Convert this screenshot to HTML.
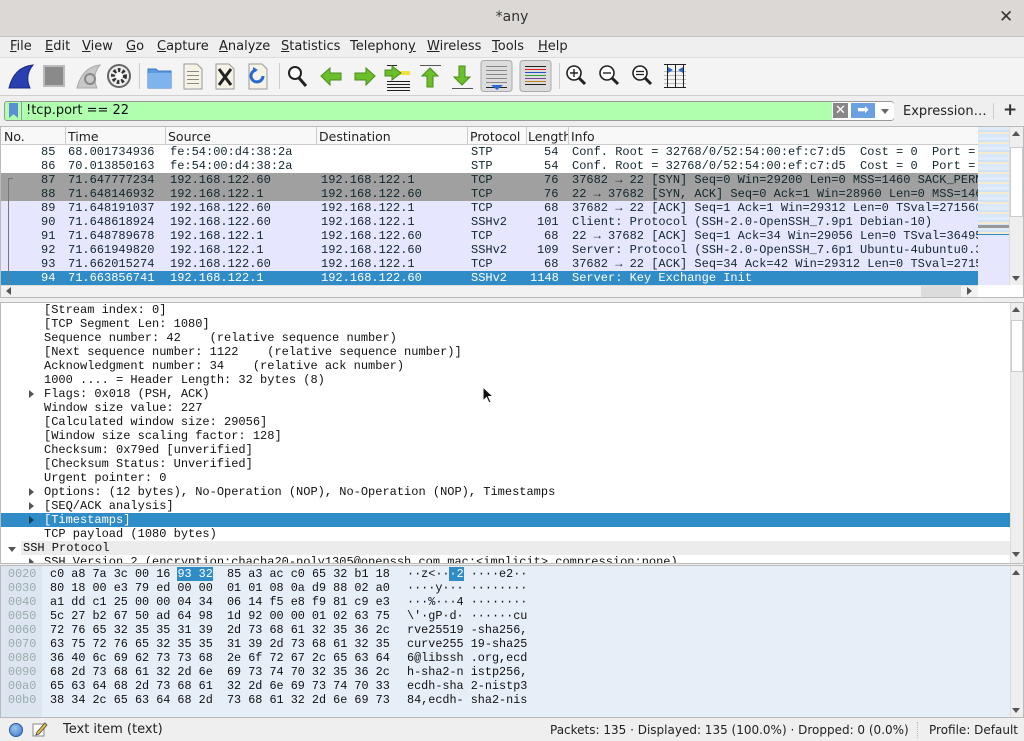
<!DOCTYPE html>
<html><head><meta charset="utf-8">
<style>
*{margin:0;padding:0;box-sizing:border-box}
body{width:1024px;height:741px;overflow:hidden;background:#efefef;font-family:"DejaVu Sans","Liberation Sans",sans-serif;font-size:13px;color:#222;position:relative}
.a{position:absolute;white-space:nowrap}
.m{font-family:"Liberation Mono","DejaVu Sans Mono",monospace;font-size:11.8px;white-space:pre;line-height:14px}
.m .a{white-space:pre}
.row{position:absolute;left:0;height:14px}
.tri{position:absolute;width:0;height:0;border-top:4px solid transparent;border-bottom:4px solid transparent;border-left:5px solid #555}
.trid{position:absolute;width:0;height:0;border-left:4px solid transparent;border-right:4px solid transparent;border-top:5px solid #555}
u{text-decoration:underline}
</style></head><body>
<!-- title -->
<div class="a" style="left:0;top:0;width:1024px;height:37px;background:#dcd8d5;border-bottom:1px solid #c8c4c0"></div>
<div class="a" style="left:0;top:9px;width:1024px;text-align:center;font-size:14px;color:#333">*any</div>
<div class="a" style="left:999px;top:7px;font-size:17px;font-weight:bold;color:#333">✕</div>
<!-- menu -->
<div class="a" style="left:0;top:37px;width:1024px;height:20px;background:#efefef"></div>
<div class="a" style="top:39px;left:10px"><u>F</u>ile</div>
<div class="a" style="top:39px;left:45px"><u>E</u>dit</div>
<div class="a" style="top:39px;left:82px"><u>V</u>iew</div>
<div class="a" style="top:39px;left:126px"><u>G</u>o</div>
<div class="a" style="top:39px;left:157px"><u>C</u>apture</div>
<div class="a" style="top:39px;left:219px"><u>A</u>nalyze</div>
<div class="a" style="top:39px;left:281px"><u>S</u>tatistics</div>
<div class="a" style="top:39px;left:350px">Telephon<u>y</u></div>
<div class="a" style="top:39px;left:427px"><u>W</u>ireless</div>
<div class="a" style="top:39px;left:492px"><u>T</u>ools</div>
<div class="a" style="top:39px;left:538px"><u>H</u>elp</div>
<!-- toolbar -->
<div class="a" style="left:0;top:57px;width:1024px;height:39px;background:#f4f4f4;border-top:1px solid #ddd;border-bottom:1px solid #cfcfcf"></div>
<svg class="a" style="left:0;top:57px" width="720" height="39">
<path d="M9 31 C12 18 20 9 33 8 C28 14 26 22 30 31 Z" fill="#2a3fb0" stroke="#1a2a80"/>
<rect x="44" y="9" width="20" height="20" fill="#8a8a8a" stroke="#bbb" stroke-width="2"/>
<path d="M77 31 C80 18 88 9 100 8 C95 14 93 22 97 31 Z" fill="#c8c8c8" stroke="#aaa"/>
<circle cx="90" cy="22" r="5" fill="none" stroke="#888" stroke-width="2"/>
<circle cx="119" cy="19" r="11" fill="#eee" stroke="#666" stroke-width="2"/>
<circle cx="119" cy="19" r="6" fill="none" stroke="#333" stroke-width="4" stroke-dasharray="2.5 2"/>
<circle cx="119" cy="19" r="3" fill="#fff"/>
<line x1="139.5" y1="6" x2="139.5" y2="32" stroke="#ccc"/>
<path d="M148 12 h8 l2 2 h13 v17 h-23 Z" fill="#5b9be0" stroke="#3a78c0"/>
<rect x="148" y="16" width="23" height="15" fill="#7fb3ee"/>
<path d="M184 7 h13 l5 5 v20 h-18 Z" fill="#f5f3e6" stroke="#999"/>
<g fill="#888"><rect x="187" y="14" width="12" height="1"/><rect x="187" y="18" width="12" height="1"/><rect x="187" y="22" width="12" height="1"/><rect x="187" y="26" width="12" height="1"/></g>
<path d="M216 7 h13 l5 5 v20 h-18 Z" fill="#f5f3e6" stroke="#999"/>
<path d="M219 12 L231 28 M231 12 L219 28" stroke="#222" stroke-width="3"/>
<path d="M249 7 h13 l5 5 v20 h-18 Z" fill="#f5f3e6" stroke="#999"/>
<path d="M263 19 A6 6 0 1 1 256 13" fill="none" stroke="#2a6ad0" stroke-width="3"/>
<path d="M253 10 l5 3 -5 3 Z" fill="#2a6ad0"/>
<line x1="279.5" y1="6" x2="279.5" y2="32" stroke="#ccc"/>
<circle cx="295" cy="16" r="6" fill="#fff" stroke="#222" stroke-width="2"/>
<path d="M299 21 L306 29" stroke="#222" stroke-width="3"/>
<path d="M321 19 l9-8 v5 h11 v7 h-11 v5 Z" fill="#6bbf2a" stroke="#4a8c1a"/>
<path d="M375 19 l-9-8 v5 h-11 v7 h11 v5 Z" fill="#6bbf2a" stroke="#4a8c1a"/>
<g stroke="#222"><line x1="387" y1="24.5" x2="410" y2="24.5"/><line x1="387" y1="27.5" x2="410" y2="27.5"/><line x1="387" y1="30.5" x2="410" y2="30.5"/><line x1="387" y1="33.5" x2="410" y2="33.5"/><line x1="387" y1="8.5" x2="397" y2="8.5"/></g>
<rect x="400" y="14" width="10" height="4" fill="#f0e040"/>
<path d="M401 16 l-9-7 v4 h-7 v6 h7 v4 Z" fill="#6bbf2a" stroke="#4a8c1a"/>
<line x1="420" y1="8.5" x2="441" y2="8.5" stroke="#555"/>
<path d="M430 11 l-8 8 h5 v11 h6 v-11 h5 Z" fill="#6bbf2a" stroke="#4a8c1a"/>
<line x1="452" y1="31.5" x2="473" y2="31.5" stroke="#555"/>
<path d="M462 28 l-8-8 h5 v-11 h6 v11 h5 Z" fill="#6bbf2a" stroke="#4a8c1a"/>
<rect x="481" y="3.5" width="31" height="31" rx="3" fill="#dcdcdc" stroke="#aaa"/>
<g stroke="#888"><line x1="486" y1="9.5" x2="507" y2="9.5"/><line x1="486" y1="13.5" x2="507" y2="13.5"/><line x1="486" y1="17.5" x2="507" y2="17.5"/><line x1="486" y1="21.5" x2="507" y2="21.5"/><line x1="486" y1="25.5" x2="507" y2="25.5"/></g>
<line x1="486" y1="30.5" x2="507" y2="30.5" stroke="#222"/>
<path d="M491 28 h12 l-6 5 Z" fill="#2a6ad0"/>
<rect x="520" y="3.5" width="31" height="31" rx="3" fill="#dcdcdc" stroke="#aaa"/>
<line x1="525" y1="9.5" x2="546" y2="9.5" stroke="#222"/><line x1="525" y1="12.5" x2="546" y2="12.5" stroke="#e02020"/><line x1="525" y1="15.5" x2="546" y2="15.5" stroke="#2a50d0"/><line x1="525" y1="18.5" x2="546" y2="18.5" stroke="#30a030"/><line x1="525" y1="21.5" x2="546" y2="21.5" stroke="#8040a0"/><line x1="525" y1="24.5" x2="546" y2="24.5" stroke="#c08020"/><line x1="525" y1="27.5" x2="546" y2="27.5" stroke="#222"/>
<line x1="559.5" y1="6" x2="559.5" y2="32" stroke="#ccc"/>
<circle cx="574" cy="16" r="7" fill="#fff" stroke="#222" stroke-width="1.6"/><path d="M570 16h8M574 12v8" stroke="#222" stroke-width="1.4"/><path d="M579 21 L585 27" stroke="#222" stroke-width="3"/>
<circle cx="607" cy="16" r="7" fill="#fff" stroke="#222" stroke-width="1.6"/><path d="M603 16h8" stroke="#222" stroke-width="1.4"/><path d="M612 21 L618 27" stroke="#222" stroke-width="3"/>
<circle cx="640" cy="16" r="7" fill="#fff" stroke="#222" stroke-width="1.6"/><path d="M636 14.5h8M636 17.5h8" stroke="#222" stroke-width="1.2"/><path d="M645 21 L651 27" stroke="#222" stroke-width="3"/>
<g stroke="#bbb"><line x1="664" y1="14.5" x2="686" y2="14.5"/><line x1="664" y1="18.5" x2="686" y2="18.5"/><line x1="664" y1="22.5" x2="686" y2="22.5"/><line x1="664" y1="26.5" x2="686" y2="26.5"/></g>
<g stroke="#222"><line x1="664" y1="7.5" x2="686" y2="7.5"/><line x1="664" y1="30.5" x2="686" y2="30.5"/><line x1="667.5" y1="7" x2="667.5" y2="31"/><line x1="675.5" y1="7" x2="675.5" y2="31"/><line x1="683.5" y1="7" x2="683.5" y2="31"/></g>
<path d="M668 10 l5 3 -5 3Z M683 10 l-5 3 5 3Z" fill="#2a6ad0"/>
</svg>
<!-- filter -->
<div class="a" style="left:0;top:96px;width:1024px;height:30px;background:#efefef"></div>
<div class="a" style="left:4px;top:101px;width:890px;height:20px;background:#afffaf;border:1px solid #999;border-radius:3px"></div>
<div class="a" style="left:9px;top:103px;width:9px;height:15px;background:#5b8fd0;clip-path:polygon(0 0,100% 0,100% 100%,50% 75%,0 100%)"></div>
<div class="a" style="left:21px;top:101px;width:1px;height:20px;background:#999"></div>
<div class="a" style="left:26px;top:103px;font-size:13px;color:#111">!tcp.port == 22</div>
<div class="a" style="left:832px;top:102px;width:62px;height:18px;background:#fff;border-radius:0 3px 3px 0"></div>
<div class="a" style="left:833px;top:103px;width:15px;height:15px;background:#888;color:#fff;font-size:13px;line-height:15px;text-align:center">✕</div>
<div class="a" style="left:851px;top:103px;width:24px;height:15px;background:#6aa0e0;color:#fff;font-size:14px;line-height:14px;text-align:center">➡</div>
<div class="trid" style="left:881px;top:109px;border-top-color:#666"></div>
<div class="a" style="left:903px;top:104px;color:#222">Expression…</div>
<div class="a" style="left:993px;top:103px;width:1px;height:16px;background:#ccc"></div>
<div class="a" style="left:1003px;top:100px;font-size:17px;font-weight:bold;color:#333">+</div>
<!-- packet list -->
<div class="a" style="left:0;top:126px;width:1024px;height:172px;background:#fff;border:1px solid #bbb"></div>
<div class="a" style="left:1px;top:127px;width:977px;height:18px;background:#f8f8f8;border-bottom:1px solid #ccc"></div>
<div class="a" style="top:129px;left:4px;font-size:12.5px">No.</div>
<div class="a" style="top:129px;left:68px;font-size:12.5px">Time</div>
<div class="a" style="top:129px;left:168px;font-size:12.5px">Source</div>
<div class="a" style="top:129px;left:319px;font-size:12.5px">Destination</div>
<div class="a" style="top:129px;left:470px;font-size:12.5px">Protocol</div>
<div class="a" style="top:129px;left:528px;width:40px;overflow:hidden;white-space:nowrap;font-size:12.5px">Length</div>
<div class="a" style="top:129px;left:571px;font-size:12.5px">Info</div>
<div class="a" style="top:127px;left:65px;width:1px;height:18px;background:#ccc"></div>
<div class="a" style="top:127px;left:165px;width:1px;height:18px;background:#ccc"></div>
<div class="a" style="top:127px;left:316px;width:1px;height:18px;background:#ccc"></div>
<div class="a" style="top:127px;left:467px;width:1px;height:18px;background:#ccc"></div>
<div class="a" style="top:127px;left:526px;width:1px;height:18px;background:#ccc"></div>
<div class="a" style="top:127px;left:568px;width:1px;height:18px;background:#ccc"></div>
<div class="a m" style="left:1px;top:145px;width:977px;height:140px;overflow:hidden;color:#12272e;font-size:12px">
<div class="row" style="top:0;width:977px;background:#fff"><span class="a" style="left:40px">85</span><span class="a" style="left:67px">68.001734936</span><span class="a" style="left:169px">fe:54:00:d4:38:2a</span><span class="a" style="left:470px">STP</span><span class="a" style="left:543px">54</span><span class="a" style="left:571px">Conf. Root = 32768/0/52:54:00:ef:c7:d5  Cost = 0  Port = 0x8003</span></div>
<div class="row" style="top:14px;width:977px;background:#fff"><span class="a" style="left:40px">86</span><span class="a" style="left:67px">70.013850163</span><span class="a" style="left:169px">fe:54:00:d4:38:2a</span><span class="a" style="left:470px">STP</span><span class="a" style="left:543px">54</span><span class="a" style="left:571px">Conf. Root = 32768/0/52:54:00:ef:c7:d5  Cost = 0  Port = 0x8003</span></div>
<div class="row" style="top:28px;width:977px;background:#a0a0a0"><span class="a" style="left:40px">87</span><span class="a" style="left:67px">71.647777234</span><span class="a" style="left:169px">192.168.122.60</span><span class="a" style="left:320px">192.168.122.1</span><span class="a" style="left:470px">TCP</span><span class="a" style="left:543px">76</span><span class="a" style="left:571px">37682 → 22 [SYN] Seq=0 Win=29200 Len=0 MSS=1460 SACK_PERM=1</span></div>
<div class="row" style="top:42px;width:977px;background:#a0a0a0"><span class="a" style="left:40px">88</span><span class="a" style="left:67px">71.648146932</span><span class="a" style="left:169px">192.168.122.1</span><span class="a" style="left:320px">192.168.122.60</span><span class="a" style="left:470px">TCP</span><span class="a" style="left:543px">76</span><span class="a" style="left:571px">22 → 37682 [SYN, ACK] Seq=0 Ack=1 Win=28960 Len=0 MSS=1460</span></div>
<div class="row" style="top:56px;width:977px;background:#e7e6ff"><span class="a" style="left:40px">89</span><span class="a" style="left:67px">71.648191037</span><span class="a" style="left:169px">192.168.122.60</span><span class="a" style="left:320px">192.168.122.1</span><span class="a" style="left:470px">TCP</span><span class="a" style="left:543px">68</span><span class="a" style="left:571px">37682 → 22 [ACK] Seq=1 Ack=1 Win=29312 Len=0 TSval=2715600</span></div>
<div class="row" style="top:70px;width:977px;background:#e7e6ff"><span class="a" style="left:40px">90</span><span class="a" style="left:67px">71.648618924</span><span class="a" style="left:169px">192.168.122.60</span><span class="a" style="left:320px">192.168.122.1</span><span class="a" style="left:470px">SSHv2</span><span class="a" style="left:536px">101</span><span class="a" style="left:571px">Client: Protocol (SSH-2.0-OpenSSH_7.9p1 Debian-10)</span></div>
<div class="row" style="top:84px;width:977px;background:#e7e6ff"><span class="a" style="left:40px">91</span><span class="a" style="left:67px">71.648789678</span><span class="a" style="left:169px">192.168.122.1</span><span class="a" style="left:320px">192.168.122.60</span><span class="a" style="left:470px">TCP</span><span class="a" style="left:543px">68</span><span class="a" style="left:571px">22 → 37682 [ACK] Seq=1 Ack=34 Win=29056 Len=0 TSval=3649500</span></div>
<div class="row" style="top:98px;width:977px;background:#e7e6ff"><span class="a" style="left:40px">92</span><span class="a" style="left:67px">71.661949820</span><span class="a" style="left:169px">192.168.122.1</span><span class="a" style="left:320px">192.168.122.60</span><span class="a" style="left:470px">SSHv2</span><span class="a" style="left:536px">109</span><span class="a" style="left:571px">Server: Protocol (SSH-2.0-OpenSSH_7.6p1 Ubuntu-4ubuntu0.3)</span></div>
<div class="row" style="top:112px;width:977px;background:#e7e6ff"><span class="a" style="left:40px">93</span><span class="a" style="left:67px">71.662015274</span><span class="a" style="left:169px">192.168.122.60</span><span class="a" style="left:320px">192.168.122.1</span><span class="a" style="left:470px">TCP</span><span class="a" style="left:543px">68</span><span class="a" style="left:571px">37682 → 22 [ACK] Seq=34 Ack=42 Win=29312 Len=0 TSval=2715</span></div>
<div class="row" style="top:126px;width:977px;background:#308cc6;color:#fff"><span class="a" style="left:40px">94</span><span class="a" style="left:67px">71.663856741</span><span class="a" style="left:169px">192.168.122.1</span><span class="a" style="left:320px">192.168.122.60</span><span class="a" style="left:470px">SSHv2</span><span class="a" style="left:529px">1148</span><span class="a" style="left:571px">Server: Key Exchange Init</span></div>
<div class="a" style="left:7px;top:33px;width:5px;height:107px;border-left:1px solid #777;border-top:1px solid #777"></div>
</div>
<!-- hscroll -->
<div class="a" style="left:1px;top:285px;width:977px;height:12px;background:#f2f2f2;border-top:1px solid #ddd"></div>
<div class="a" style="left:921px;top:286px;width:40px;height:11px;background:#dcdcdc"></div>
<div class="a" style="left:6px;top:287px;width:0;height:0;border-top:4px solid transparent;border-bottom:4px solid transparent;border-right:5px solid #555"></div>
<div class="a" style="left:967px;top:287px;width:0;height:0;border-top:4px solid transparent;border-bottom:4px solid transparent;border-left:5px solid #555"></div>
<!-- minimap -->
<div class="a" style="left:978px;top:127px;width:31px;height:158px;background:repeating-linear-gradient(#e0ecfa 0 3px,#cfe2f6 3px 5px,#f6ead0 5px 7px,#d8e8f8 7px 10px)"></div>
<div class="a" style="left:978px;top:225px;width:31px;height:3px;background:#999"></div>
<div class="a" style="left:978px;top:234px;width:31px;height:1px;background:#308cc6"></div>
<div class="a" style="left:978px;top:236px;width:31px;height:49px;background:#e7e6ff"></div>
<div class="a" style="left:1009px;top:127px;width:14px;height:158px;background:#eee;border-left:1px solid #ddd"></div>
<div class="a" style="left:1010px;top:147px;width:13px;height:70px;background:#fff;border:1px solid #ccc"></div>
<div class="a" style="left:1012px;top:131px;width:0;height:0;border-left:4px solid transparent;border-right:4px solid transparent;border-bottom:5px solid #555"></div>
<div class="a" style="left:1012px;top:276px;width:0;height:0;border-left:4px solid transparent;border-right:4px solid transparent;border-top:5px solid #555"></div>
<!-- detail pane -->
<div class="a" style="left:0;top:302px;width:1024px;height:262px;background:#fff;border:1px solid #bbb"></div>
<div class="a m" style="left:1px;top:303px;width:1009px;height:260px;overflow:hidden;color:#111;font-size:12px">
<div class="row" style="top:0"><span class="a" style="left:43px">[Stream index: 0]</span></div>
<div class="row" style="top:14px"><span class="a" style="left:43px">[TCP Segment Len: 1080]</span></div>
<div class="row" style="top:28px"><span class="a" style="left:43px">Sequence number: 42    (relative sequence number)</span></div>
<div class="row" style="top:42px"><span class="a" style="left:43px">[Next sequence number: 1122    (relative sequence number)]</span></div>
<div class="row" style="top:56px"><span class="a" style="left:43px">Acknowledgment number: 34    (relative ack number)</span></div>
<div class="row" style="top:70px"><span class="a" style="left:43px">1000 .... = Header Length: 32 bytes (8)</span></div>
<div class="row" style="top:84px"><span class="tri" style="left:28px;top:3px"></span><span class="a" style="left:43px">Flags: 0x018 (PSH, ACK)</span></div>
<div class="row" style="top:98px"><span class="a" style="left:43px">Window size value: 227</span></div>
<div class="row" style="top:112px"><span class="a" style="left:43px">[Calculated window size: 29056]</span></div>
<div class="row" style="top:126px"><span class="a" style="left:43px">[Window size scaling factor: 128]</span></div>
<div class="row" style="top:140px"><span class="a" style="left:43px">Checksum: 0x79ed [unverified]</span></div>
<div class="row" style="top:154px"><span class="a" style="left:43px">[Checksum Status: Unverified]</span></div>
<div class="row" style="top:168px"><span class="a" style="left:43px">Urgent pointer: 0</span></div>
<div class="row" style="top:182px"><span class="tri" style="left:28px;top:3px"></span><span class="a" style="left:43px">Options: (12 bytes), No-Operation (NOP), No-Operation (NOP), Timestamps</span></div>
<div class="row" style="top:196px"><span class="tri" style="left:28px;top:3px"></span><span class="a" style="left:43px">[SEQ/ACK analysis]</span></div>
<div class="row" style="top:210px;width:1009px;background:#308cc6;color:#fff"><span class="tri" style="left:28px;top:3px;border-left-color:#1a3a5a"></span><span class="a" style="left:43px">[Timestamps]</span></div>
<div class="row" style="top:224px"><span class="a" style="left:43px">TCP payload (1080 bytes)</span></div>
<div class="row" style="top:238px;left:20px;width:989px;background:#ececec"><span class="a" style="left:2px">SSH Protocol</span></div>
<span class="trid" style="left:7px;top:244px"></span>
<div class="row" style="top:252px"><span class="tri" style="left:28px;top:3px"></span><span class="a" style="left:43px">SSH Version 2 (encryption:chacha20-poly1305@openssh.com mac:&lt;implicit&gt; compression:none)</span></div>
</div>
<div class="a" style="left:1010px;top:303px;width:13px;height:260px;background:#eee;border-left:1px solid #ddd"></div>
<div class="a" style="left:1011px;top:320px;width:12px;height:52px;background:#fff;border:1px solid #ccc"></div>
<div class="a" style="left:1012px;top:307px;width:0;height:0;border-left:4px solid transparent;border-right:4px solid transparent;border-bottom:5px solid #555"></div>
<div class="a" style="left:1012px;top:552px;width:0;height:0;border-left:4px solid transparent;border-right:4px solid transparent;border-top:5px solid #555"></div>
<svg class="a" style="left:482px;top:386px" width="14" height="20"><path d="M1 1 L1 15 L4.5 11.5 L7 17 L9 16 L6.5 10.5 L11 10.5 Z" fill="#111" stroke="#fff" stroke-width="1"/></svg>
<!-- hex pane -->
<div class="a" style="left:0;top:565px;width:1024px;height:153px;background:#e6eef8;border:1px solid #bbb"></div>
<div class="a" style="left:1px;top:566px;width:41px;height:151px;background:#dde6f0"></div>
<div class="a m" style="left:8px;top:567px;color:#9aa">0020
0030
0040
0050
0060
0070
0080
0090
00a0
00b0</div>
<div class="a m" style="left:50px;top:567px;color:#111">c0 a8 7a 3c 00 16 <span style="background:#308cc6;color:#fff">93 32</span>  85 a3 ac c0 65 32 b1 18
80 18 00 e3 79 ed 00 00  01 01 08 0a d9 88 02 a0
a1 dd c1 25 00 00 04 34  06 14 f5 e8 f9 81 c9 e3
5c 27 b2 67 50 ad 64 98  1d 92 00 00 01 02 63 75
72 76 65 32 35 35 31 39  2d 73 68 61 32 35 36 2c
63 75 72 76 65 32 35 35  31 39 2d 73 68 61 32 35
36 40 6c 69 62 73 73 68  2e 6f 72 67 2c 65 63 64
68 2d 73 68 61 32 2d 6e  69 73 74 70 32 35 36 2c
65 63 64 68 2d 73 68 61  32 2d 6e 69 73 74 70 33
38 34 2c 65 63 64 68 2d  73 68 61 32 2d 6e 69 73</div>
<div class="a m" style="left:407px;top:567px;color:#111">··z&lt;··<span style="background:#308cc6;color:#fff">·2</span> ····e2··
····y··· ········
···%···4 ········
\'·gP·d· ······cu
rve25519 -sha256,
curve255 19-sha25
6@libssh .org,ecd
h-sha2-n istp256,
ecdh-sha 2-nistp3
84,ecdh- sha2-nis</div>
<div class="a" style="left:1010px;top:566px;width:13px;height:151px;background:#eee;border-left:1px solid #ddd"></div>
<div class="a" style="left:1012px;top:570px;width:0;height:0;border-left:4px solid transparent;border-right:4px solid transparent;border-bottom:5px solid #555"></div>
<div class="a" style="left:1012px;top:708px;width:0;height:0;border-left:4px solid transparent;border-right:4px solid transparent;border-top:5px solid #555"></div>
<!-- status -->
<div class="a" style="left:0;top:718px;width:1024px;height:23px;background:#efefef"></div>
<div class="a" style="left:9px;top:723px;width:14px;height:14px;border-radius:50%;background:radial-gradient(circle at 40% 35%,#9cc4f0,#3a78c8);border:1px solid #2a5a9a"></div>
<svg class="a" style="left:32px;top:721px" width="16" height="16"><rect x="1" y="3" width="11" height="12" fill="#fff" stroke="#888"/><path d="M5 11 L13 2 L15 4 L7 13 L4 14 Z" fill="#e8c040" stroke="#444" stroke-width="0.8"/></svg>
<div class="a" style="left:63px;top:722px">Text item (text)</div>
<div class="a" style="left:550px;top:723px;font-size:12px">Packets: 135 · Displayed: 135 (100.0%) · Dropped: 0 (0.0%)</div>
<div class="a" style="left:917px;top:722px;width:1px;height:16px;border-left:1px dotted #bbb"></div>
<div class="a" style="left:929px;top:723px;font-size:12px">Profile: Default</div>
</body></html>
